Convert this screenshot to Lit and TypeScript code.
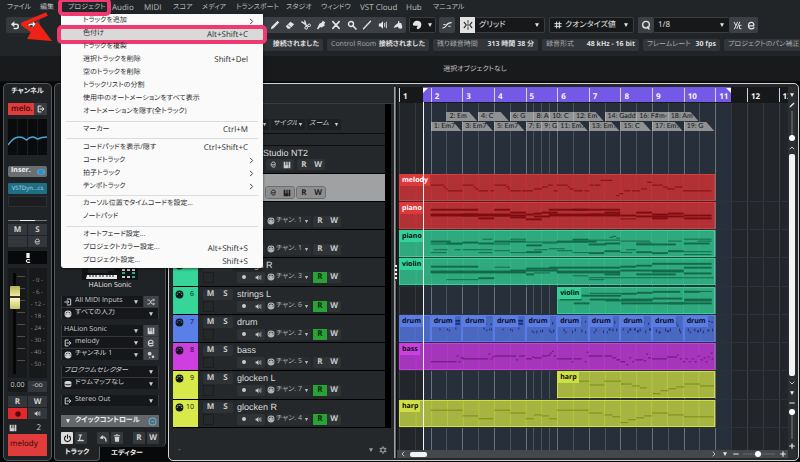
import { LitElement, html, svg, css, nothing } from "lit";
import { customElement } from "lit/decorators.js";
import { classMap } from "lit/directives/class-map.js";
import { styleMap } from "lit/directives/style-map.js";

/* ---------- icons, all on a 12 x 12 grid ---------- */
const line = (d: string, w = 1.4) =>
  svg`<path d=${d} fill="none" stroke="currentColor" stroke-width=${w} stroke-linecap="round" stroke-linejoin="round"/>`;
const fill = (d: string) => svg`<path d=${d} fill="currentColor"/>`;

const ICONS: Record<string, unknown> = {
  undo: svg`${line("M4.5 5.2h3a2.4 2.4 0 0 1 0 4.9H5", 1.8)}${fill("M1 5.2 5.2 1.6v7.2z")}`,
  redo: svg`${line("M7.5 5.2h-3a2.4 2.4 0 0 0 0 4.9H7", 1.8)}${fill("M11 5.2 6.8 1.6v7.2z")}`,
  pencil: fill("M1 11l.8-2.8L9 1l2 2-7.2 7.2z"),
  eraser: svg`${fill("M1 7.5 6.5 2 11 5.2 5.8 10.5H3.2z")}<path d="M3.2 5.6 7.4 9" stroke="#333" stroke-width=".8"/>`,
  scissors: svg`${line("M1 2.2 8 7M4.5 1.2 6.5 7.5", 1.6)}<circle cx="6.2" cy="9.4" r="1.6" fill="none" stroke="currentColor" stroke-width="1.2"/><circle cx="9.8" cy="6.4" r="1.6" fill="none" stroke="currentColor" stroke-width="1.2"/>`,
  glue: fill("M1 10.8 4 4.5 7 3l1-2 3 1.6-1 2.2 .4 2.2L6.6 9l-1.6-.6L2.6 11z"),
  cross: line("M2.2 2l7.6 8M9.8 2 2.2 10", 1.9),
  zoom: svg`<circle cx="4.8" cy="4.8" r="3" fill="none" stroke="currentColor" stroke-width="1.7"/>${line("M7.2 7.2l3.6 3.6", 2)}`,
  stroke: line("M1.8 10.5 10.2 1.5", 1.6),
  speaker: svg`${fill("M1 4.2h2L6 1.5v9L3 7.8H1z")}${line("M8 4v4M10 2.6v6.8", 1.1)}`,
  paint: svg`${fill("M.8 9.5 2 7l4-3.4V1.5h1.6V3.6h2.2L11.2 8l-1 2.6-3-.4-1.4-2.2z")}`,
  palette: fill("M6 1c3.2 0 5.2 2 5.2 4.6S9.4 10.8 6.6 11L5.6 9.2 7 7H3.4L1 6.4C1 3 3.2 1 6 1z"),
  curve: svg`${line("M1 9.6c4.5 0 3.4-6.4 10-6.4", 1.4)}${line("M2 5.5h2M8 7.5h2", 1.2)}`,
  snap: svg`${line("M6 .8v2M6 4.6v2.6M6 9.2v2", 1.2)}${line("M1.4 2.8 4 6 1.4 9.2M10.6 2.8 8 6l2.6 3.2", 1.4)}`,
  hash: line("M4 1.5v9M8 1.5v9M1.2 4h9.6M1.2 8h9.6", 1.5),
  q: svg`<circle cx="6" cy="5.6" r="4" fill="none" stroke="currentColor" stroke-width="1.7"/>${line("M7.6 8.2l2 2.6", 1.6)}`,
  iq: svg`${line("M1.6 1.8 3.6 5.4M6 1.5 2 10.5M9 1.5 5.2 10M10.8 5.8H8.6v4.4h2.2", 1.3)}`,
  e: line("M3.6 6.6h5.2c1-3-.8-4.8-2.8-4.8S2 3.6 2 6.2c0 2.7 1.8 4.2 4 4.2 1.4 0 2.4-.5 3.2-1.4", 1.7),
  exit: svg`${line("M6 1.6H1.8v8.8H6", 1.5)}${line("M4.5 6h5.5M8 3.8 10.4 6 8 8.2", 1.5)}`,
  enter: svg`${line("M5 1.6h5v8.8H5", 1.5)}${line("M1.2 6h5.5M4.8 3.8 7 6 4.8 8.2", 1.5)}`,
  midi: svg`<circle cx="6" cy="6" r="5.2" fill="currentColor"/><g fill="var(--dot,#222)"><circle cx="2.9" cy="6" r=".8"/><circle cx="3.9" cy="3.8" r=".8"/><circle cx="6" cy="3" r=".8"/><circle cx="8.1" cy="3.8" r=".8"/><circle cx="9.1" cy="6" r=".8"/></g>`,
  shuffle: line("M1 3h2.5l4 6H11M1 9h2.5l4-6H11M9.6 1.6 11 3 9.6 4.4M9.6 7.6 11 9 9.6 10.4", 1.3),
  keys: svg`${fill("M1 1h2.6v5.5h.9V11H1zM5 1h2v5.5h.5V11h-3V6.5H5zM8.4 1H11v10H8V6.5h.4z")}`,
  dots: svg`<circle cx="4" cy="4" r="2.8" fill="currentColor"/><circle cx="9" cy="8.8" r="2" fill="currentColor"/><circle cx="4" cy="10" r="1" fill="currentColor"/>`,
  drum: svg`<path d="M1 3.5C1 1 11 1 11 3.5V8.5C11 11 1 11 1 8.5z" fill="currentColor"/><path d="M2 5.5c2 1.2 6 1.2 8 0v1.5c-2 1-6 1-8 0z" fill="#222"/>`,
  power: svg`${line("M3.6 3A4 4 0 1 0 8.4 3M6 1v4.5", 1.5)}`,
  ell: line("M5.5 1.5 3.5 9.5H9M3 1.5h4M1.5 10h8", 1.8),
  arc: svg`${line("M10.5 10.5C10.5 6 8 3.6 4.5 4.6", 2)}${fill("M.8 6.5 5.5 1.5 6.5 8z")}`,
  trash: svg`${fill("M2.5 4h7l-.6 7.5H3.1z")}${line("M1.8 2.5h8.4M4.8 1.2h2.4", 1.3)}`,
  dot: svg`<circle cx="6" cy="6" r="4" fill="currentColor"/>`,
  down: fill("M2 2.5h8L6 10z"),
  right: line("M4 2l4 4-4 4", 1.5),
  left: line("M8 2 4 6l4 4", 1.6),
  up: line("M2 8l4-4 4 4", 1.6),
  chev: line("M2 4l4 4 4-4", 1.6),
  plus: line("M6 1.5v9M1.5 6h9", 2.4),
  minus: line("M1.5 6h9", 2.4),
  gear: svg`<circle cx="6" cy="6" r="3.2" fill="none" stroke="currentColor" stroke-width="1.6"/>${line("M6 .8v1.4M6 9.8v1.4M1.5 3.4l1.2.7M9.3 7.9l1.2.7M1.5 8.6l1.2-.7M9.3 4.1l1.2-.7", 1.6)}`,
  bypass: svg`<rect x="0" y="2" width="12" height="8" rx="4" fill="#3fa3dc"/><path d="M4.5 3v6M7.5 3v6" stroke="#27698f" stroke-width="1.2"/>`,
  ring: svg`<circle cx="6" cy="6" r="4.6" fill="none" stroke="#58b1e6" stroke-width="1.4"/><path d="M4.5 6h3.5" stroke="#58b1e6" stroke-width="1.4"/>`,
  mixer: svg`${fill("M4 0h4v6H4z")}${line("M8 8.2c-3-1-4 0-4 1.4s2 2 4 1.4", 1.3)}`,
};
const icon = (name: string, size = 9) =>
  html`<svg class="icon" viewBox="0 0 12 12" width=${size} height=${size} aria-hidden="true">${ICONS[name]}</svg>`;

const base = css`
  * { box-sizing: border-box; }
  button, select, input { font: inherit; color: inherit; margin: 0; padding: 0; border: 0; background: none; border-radius: 0; text-rendering: inherit; font-feature-settings: inherit; }
  button { display: inline-flex; align-items: center; justify-content: center; white-space: nowrap; }
  select { appearance: none; flex: 1; min-width: 0; width: 100%; height: 100%; outline: none; text-overflow: clip; }
  .icon { display: block; flex: none; overflow: visible; }
  .pick { display: flex; align-items: center; gap: 3px; min-width: 0; }
`;

const pick = (label: string, value: string, lead?: string, caret = 6, cls = "") => html`
  <label class="pick ${cls}">${lead ? icon(lead, 8) : nothing}<select aria-label=${label}><option>${value}</option></select>${icon("down", caret)}</label>`;

/* ---------- project menu ---------- */
type Entry = { text: string; keys?: string; sub?: boolean; on?: boolean } | null;
const ENTRIES: Entry[] = [
  { text: "トラックを追加", sub: true },
  { text: "色付け", keys: "Alt+Shift+C", on: true },
  { text: "トラックを複製" },
  { text: "選択トラックを削除", keys: "Shift+Del" },
  { text: "空のトラックを削除" },
  { text: "トラックリストの分割" },
  { text: "使用中のオートメーションをすべて表示" },
  { text: "オートメーションを隠す(全トラック)" },
  null,
  { text: "マーカー", keys: "Ctrl+M" },
  null,
  { text: "コードパッドを表示/隠す", keys: "Ctrl+Shift+C" },
  { text: "コードトラック", sub: true },
  { text: "拍子トラック", sub: true },
  { text: "テンポトラック", sub: true },
  null,
  { text: "カーソル位置でタイムコードを設定..." },
  { text: "ノートパッド" },
  null,
  { text: "オートフェード設定..." },
  { text: "プロジェクトカラー設定...", keys: "Alt+Shift+S" },
  { text: "プロジェクト設定...", keys: "Shift+S" },
];

@customElement("project-menu")
export class ProjectMenu extends LitElement {
  static styles = [base, css`
    :host { display: flex; flex-direction: column; box-sizing: border-box; width: 202px; height: 254px; padding-top: 1px; background: #fafafa; color: #2c2c2c; border-radius: 0 0 3px 3px; box-shadow: 0 1px 3px #0008; font-size: 7px; }
    .entry { flex: 1 1 13px; min-height: 0; width: 100%; justify-content: space-between; padding: 0 15px 0 22px; position: relative; }
    .entry.sub { padding-right: 8px; }
    .entry.on { background: #d9d9da; }
    .entry.on::after { content: ""; position: absolute; inset: -3px -4px; border: 4px solid #ee3a70; border-radius: 5px; }
    .keys { font-size: 8px; }
    hr { flex: none; width: 192px; height: 1px; margin: 2px 5px; border: 0; background: #dcdcdc; }
  `];
  render() {
    return ENTRIES.map((e) => e
      ? html`<button role="menuitem" class=${classMap({ entry: true, on: !!e.on, sub: !!e.sub })}>
          <span>${e.text}</span>${e.keys ? html`<span class="keys">${e.keys}</span>` : nothing}${e.sub ? icon("right", 7) : nothing}
        </button>`
      : html`<hr>`);
  }
}

/* ---------- top bars ---------- */
const MENUS = ["ファイル", "編集", "プロジェクト", "Audio", "MIDI", "スコア", "メディア", "トランスポート", "スタジオ", "ウィンドウ", "VST Cloud", "Hub", "マニュアル"];
const TOOLS: [string, string][] = [["pencil", "鉛筆"], ["eraser", "消しゴム"], ["scissors", "はさみ"], ["glue", "のり"], ["cross", "ミュート"], ["zoom", "ズーム"], ["stroke", "ライン"], ["speaker", "再生"], ["paint", "カラー"]];

@customElement("top-bars")
export class TopBars extends LitElement {
  static styles = [base, css`
    :host { display: block; background: #222528; color: #b9bbbd; font-size: 7px; position: relative; }
    nav { display: grid; grid-template-columns: 33px 28px 44px 32px 29px 29px 34px 50px 35px 39px 46px 27px auto; height: 16px; padding-left: 7px; justify-items: start; }
    nav button { position: relative; height: 16px; }
    .latin { font-size: 8px; }
    .open::after { content: ""; position: absolute; inset: -2px -5px 0 -10px; border: 4px solid #ee3a70; border-radius: 5px; }
    .tools { display: flex; align-items: center; height: 19px; padding: 1px 0 2px 6px; color: #e4e4e4; }
    .tools > * { height: 16px; flex: none; }
    .history { display: flex; width: 34px; background: #36393c; border-radius: 2px; margin-right: 222px; }
    .history button { flex: 1; }
    .strip { display: grid; grid-template-columns: repeat(9, 1fr); width: 144px; padding-left: 5px; background: #3c3f43; border-radius: 2px; margin-right: 3px; }
    .dark { background: #17181a; border: 1px solid #3a3d40; border-radius: 2px; padding: 0 4px; gap: 5px; }
    .color { width: 27px; margin-right: 3px; }
    .curve { width: 16px; background: #3c3f43; border-radius: 2px; margin-right: 5px; }
    .snap { width: 15px; background: #e2e2e2; color: #222; }
    .grid { width: 70px; margin-right: 4px; border-left: 0; font-size: 8px; }
    .quant { width: 85px; margin-right: 4px; font-size: 8px; gap: 3px; }
    .q { width: 15px; background: #3c3f43; }
    .eighth { width: 77px; font-size: 8px; }
    .iq { width: 28px; background: #3c3f43; display: flex; border-radius: 0 2px 2px 0; }
    .iq button { flex: 1; }
    .status { display: flex; gap: 4px; height: 21px; padding: 4px 0 5px 230px; overflow: hidden; color: #a9abad; }
    .cell { display: flex; flex: none; align-items: center; justify-content: space-between; height: 12px; padding: 0 4px; background: #323539; border-radius: 2px; white-space: nowrap; }
    .cell b { color: #dedede; font-weight: 700; }
    .c1 { width: 93px; } .c2 { width: 102px; } .c3 { width: 105px; } .c4 { width: 97px; } .c5 { width: 77px; } .c6 { width: 110px; }
    .info { display: flex; align-items: center; justify-content: center; height: 26px; padding: 3px 0 0 150px; background: #191a1c; color: #c4c4c4; border-bottom: 1px solid #0d0d0e; }
    project-menu { position: absolute; left: 61px; top: 14px; z-index: 5; }
    .arrow { position: absolute; left: 0; top: 0; z-index: 7; pointer-events: none; }
    .front { z-index: 6; }
  `];
  render() {
    return html`
      <nav aria-label="メニュー">${MENUS.map((m) => html`<button class=${classMap({ open: m === "プロジェクト", front: m === "プロジェクト", latin: /^[A-Z]/.test(m) })}>${m}</button>`)}</nav>
      <div class="tools">
        <div class="history"><button aria-label="元に戻す">${icon("undo", 10)}</button><button aria-label="やり直し">${icon("redo", 10)}</button></div>
        <div class="strip">${TOOLS.map(([i, l]) => html`<button aria-label=${l}>${icon(i, 10)}</button>`)}</div>
        <button class="dark color" aria-label="カラー">${icon("palette", 10)}${icon("down", 6)}</button>
        <button class="curve" aria-label="ゼロクロス">${icon("curve", 10)}</button>
        <button class="snap" aria-label="スナップ">${icon("snap", 10)}</button>
        ${pick("スナップタイプ", "グリッド", undefined, 6, "dark grid")}
        ${pick("グリッドの間隔", "クオンタイズ値", "hash", 6, "dark quant")}
        <button class="q" aria-label="クオンタイズ">${icon("q", 10)}</button>
        ${pick("クオンタイズプリセット", "1/8", undefined, 6, "dark eighth")}
        <div class="iq"><button aria-label="iQ">${icon("iq", 9)}</button><button aria-label="編集">${icon("e", 9)}</button></div>
      </div>
      <div class="status">
        <div class="cell c1"><span></span><b>接続されました</b></div>
        <div class="cell c2"><span>Control Room</span><b>接続されました</b></div>
        <div class="cell c3"><span>残り録音時間</span><b>313 時間 38 分</b></div>
        <div class="cell c4"><span>録音形式</span><b>48 kHz - 16 bit</b></div>
        <div class="cell c5"><span>フレームレート</span><b>30 fps</b></div>
        <div class="cell c6"><span>プロジェクトのパン補正</span><b>均等</b></div>
      </div>
      <div class="info">選択オブジェクトなし</div>
      <project-menu role="menu"></project-menu>
      <svg class="arrow" width="60" height="46" viewBox="0 0 60 46" aria-hidden="true">
        <path d="M47 14 23 24 33 31" fill="none" stroke="#f02218" stroke-width="4" stroke-linejoin="round"/><path d="M37 21 52 41 27 39z" fill="#f02218"/>
      </svg>`;
  }
}

/* ---------- channel strip ---------- */
@customElement("channel-strip")
export class ChannelStrip extends LitElement {
  static styles = [base, css`
    :host { display: flex; flex-direction: column; width: 49px; padding: 0 4px 4px; border: 1px solid #55585b; border-radius: 5px; background: #202326; color: #d0d0d0; font-size: 7px; }
    h2 { margin: 0; font-size: 7px; line-height: 15px; text-align: center; color: #eee; }
    .name { display: flex; height: 12px; margin-top: 4px; }
    .name span { width: 26px; padding-left: 3px; background: #e23b3b; color: #3a0808; font-size: 8px; font-weight: 600; line-height: 11px; }
    .name button { flex: 1; background: #3a3d40; color: #eee; }
    .eq { height: 36px; margin-top: 4px; background: #090b0d; display: block; width: 100%; }
    .insert { display: flex; align-items: center; justify-content: space-between; height: 11px; margin-top: 11px; padding: 0 2px 0 3px; background: #6c6f72; border-radius: 2px; font-weight: 700; color: #f2f2f2; }
    .slot { height: 11px; margin-top: 6px; background: #1e6f83; color: #b7dbe4; border-radius: 1px; font-size: 6px; }
    .empty { height: 11px; margin-top: 2px; border: 1px solid #2c2f32; background: #1b1d20; }
    .rule { height: 1px; margin: 13px 0 3px; background: linear-gradient(90deg, #777 30%, #eee 30% 70%, #777 70%); }
    .pair { display: grid; grid-template-columns: 1fr 1fr; gap: 1px; }
    .pair > * { height: 11px; background: #33363a; font-weight: 700; font-size: 8px; }
    .pan { display: flex; align-items: center; justify-content: center; height: 13px; margin-top: 4px; background: #08090a; color: #f2f2f2; }
    .fader { display: grid; grid-template-columns: 1fr 1fr; gap: 2px; flex: 1; min-height: 90px; margin: 4px 0 3px; }
    .well { background: #17191b; position: relative; padding: 8px 2px 0 9px; }
    .well::before { content: ""; position: absolute; left: 5px; top: 5px; bottom: 4px; width: 3px; background: #050505; }
    .ticks { height: 86px; background: repeating-linear-gradient(#4a4d50 0 1px, transparent 1px 12px); }
    .cap { position: absolute; left: 2px; top: 18px; width: 10px; height: 23px; background: linear-gradient(#b5b053, #f0ec9a 42%, #333 43% 50%, #fbf8c0 52%, #c8c468); border-radius: 1px; }
    .scale { background: #17191b; padding-top: 6px; line-height: 12px; text-align: center; color: #8e9092; font-size: 6px; display: flex; flex-direction: column; }
    .val > * { font-weight: 400; font-size: 7px; display: flex; align-items: center; justify-content: center; background: #17191b; }
    .val > :last-child { background: #33363a; }
    .rw { margin-top: 4px; }
    .rw .rec { background: #e0292c; color: #5a0505; }
    .out { display: flex; align-items: center; justify-content: space-between; height: 13px; margin-top: 2px; padding: 0 6px 0 1px; font-size: 8px; }
    .tag { height: 22px; background: #e23b3b; color: #2a0808; font-size: 8px; line-height: 19px; padding-left: 2px; }
  `];
  render() {
    return html`
      <h2>チャンネル</h2>
      <div class="name"><span>melo.</span><button aria-label="出力">${icon("exit", 8)}</button></div>
      <svg class="eq" viewBox="0 0 38 36" preserveAspectRatio="none" aria-hidden="true">
        <path d="M9 0v36M19 0v36M29 0v36" stroke="#1c2226"/>
        <path d="M0 26C4 20 7 18 11 18c5 0 5 2 7 3 2-2 3-3 6-3 3 0 3 2 5 2 2-1 5-2 9-2" fill="none" stroke="#4aa7dc" stroke-width="1.4"/>
      </svg>
      <div class="insert"><span>Inser.</span>${icon("bypass", 8)}</div>
      <button class="slot">VSTDyn...cs</button>
      <div class="empty"></div>
      <div class="rule"></div>
      <div class="pair"><button>M</button><button>S</button><span></span><button aria-label="編集">${icon("e", 7)}</button></div>
      <div class="pan">${icon("mixer", 10)}</div>
      <div class="fader">
        <div class="well"><div class="ticks"></div><div class="cap"></div></div>
        <div class="scale">${[0, 6, 12, 18, 24, 30, 40, 50].map((n) => html`<span>- ${n} -</span>`)}</div>
      </div>
      <div class="pair val"><span>0.00</span><span>-oo</span></div>
      <div class="pair rw"><button>R</button><button>W</button><button class="rec" aria-label="録音">${icon("dot", 8)}</button><button aria-label="モニター">${icon("speaker", 7)}</button></div>
      <div class="out">${icon("keys", 8)}<span>2</span></div>
      <div class="tag">melody</div>`;
  }
}

/* ---------- inspector ---------- */
@customElement("track-inspector")
export class TrackInspector extends LitElement {
  static styles = [base, css`
    :host { display: flex; flex-direction: column; width: 112px; color: #d0d2d3; font-size: 7px; }
    .body { flex: 1; display: flex; flex-direction: column; padding: 183px 6px 3px; border: 1px solid #55585b; border-bottom: 0; border-radius: 5px 5px 5px 0; background: #202326; }
    .art { align-self: center; display: block; }
    .title { font-size: 7px; line-height: 11px; text-align: center; color: #e6e6e6; font-weight: 500; }
    .box { display: grid; grid-template-columns: 1fr 14px; gap: 1px; background: #34373a; border: solid #34373a; border-width: 0 1px; margin-top: 5px; }
    .box + .box { margin-top: 6px; }
    .box .pick { height: 11px; background: #15171a; padding: 0 4px 0 2px; }
    .box .wide { grid-column: span 2; }
    .box button { background: #404347; }
    .italic { font-style: italic; }
    .quick { display: flex; align-items: center; gap: 4px; height: 12px; margin-top: 9px; padding: 0 2px 0 4px; background: #64686b; color: #f0f0f0; font-weight: 700; }
    .quick span { flex: 1; }
    .acts { display: flex; gap: 2px; margin-top: 5px; font-size: 8px; font-weight: 700; }
    .acts button { width: 12px; height: 12px; background: #36393c; border-radius: 1px; }
    .acts .on { background: #dcdcdc; color: #222; }
    .gap { flex: 1; }
    .tabs { display: flex; height: 14px; font-weight: 700; color: #f0f0f0; }
    .tabs button { flex: 0 0 54px; }
    .tabs .cur { flex: 0 0 46px; background: #202326; border: 1px solid #55585b; border-top: 0; border-radius: 0 0 4px 4px; }
  `];
  render() {
    return html`
      <div class="body">
        <svg class="art" width="56" height="13" viewBox="0 0 56 13" aria-hidden="true">
          <rect width="56" height="13" fill="#101214"/><path d="M5 8h30v4H4z" fill="#e8e8e8"/>
          <path d="M8 8v2M11 8v2M14 8v2M18 8v2M21 8v2M25 8v2M28 8v2M31 8v2" stroke="#222"/>
          <path d="M40 3h3M45 3h3M50 3h3M40 10h3M45 10h3" stroke="#c9c9c9" stroke-width="2"/><path d="M40 6h3M50 6h3M50 10h3" stroke="#2fae7b" stroke-width="2"/>
          <path d="M6 3h26M6 5h20" stroke="#33373a"/>
        </svg>
        <div class="title">HALion Sonic</div>
        <div class="box">
          ${pick("MIDI入力", "All MIDI Inputs", "enter")}<button aria-label="変換">${icon("shuffle", 8)}</button>
          ${pick("入力", "すべての入力", "midi", 6, "wide")}
        </div>
        <div class="box">
          ${pick("音源", "HALion Sonic")}<button aria-label="鍵盤">${icon("keys", 8)}</button>
          ${pick("出力", "melody", "exit")}<button aria-label="編集">${icon("e", 8)}</button>
          ${pick("チャンネル", "チャンネル 1", "midi")}<button aria-label="設定">${icon("dots", 8)}</button>
        </div>
        <div class="box">
          ${pick("プログラム", "プログラムセレクター", undefined, 6, "wide italic")}
          ${pick("ドラムマップ", "ドラムマップなし", "drum", 6, "wide")}
        </div>
        <div class="box">${pick("オーディオ出力", "Stereo Out", "exit", 6, "wide")}</div>
        <div class="quick">${icon("down", 6)}<span>クイックコントロール</span>${icon("ring", 9)}</div>
        <div class="acts">
          <button class="on" aria-label="オン">${icon("power", 9)}</button><button aria-label="ラーン">${icon("ell", 8)}</button><span class="gap"></span>
          <button aria-label="戻す">${icon("arc", 8)}</button><button aria-label="削除">${icon("trash", 8)}</button><span class="gap"></span>
          <button>R</button><button>W</button>
        </div>
      </div>
      <div class="tabs"><button class="cur">トラック</button><button>エディター</button></div>`;
  }
}

/* ---------- track list ---------- */
type Track = { no?: number; name?: string; color: string; ch?: number; read?: boolean; sel?: boolean };
const TRACKS: Track[] = [
  { color: "#dd3a3c", sel: true },
  { color: "#dd3a3c", ch: 1 },
  { color: "#36d69a", ch: 1 },
  { name: "strings R", color: "#36d69a", ch: 3, read: true },
  { no: 6, name: "strings L", color: "#36d69a", ch: 6, read: true },
  { no: 7, name: "drum", color: "#5b7fe8", ch: 2, read: true },
  { no: 8, name: "bass", color: "#ce3fe0", ch: 5 },
  { no: 9, name: "glocken L", color: "#d8e94b", ch: 7, read: true },
  { no: 10, name: "glocken R", color: "#d8e94b", ch: 4, read: true },
];

@customElement("track-list")
export class TrackList extends LitElement {
  static styles = [base, css`
    :host { display: flex; flex-direction: column; width: 225px; color: #c9cbcc; font-size: 8px; }
    .head { height: 17px; border-bottom: 1px solid #3b3e41; }
    .list { padding-left: 4px; margin-right: 3px; border-right: 6px solid #000; }
    .filters { display: flex; gap: 2px; height: 30px; padding: 15px 0 3px 88px; border-bottom: 1px solid #0c0d0e; font-size: 7px; font-style: italic; }
    .filters .pick { height: 11px; width: 34px; padding: 0 2px; gap: 1px; background: #1d2022; }
    .filters .tiny { width: 8px; padding: 0 1px; }
    .blank { height: 12px; border-bottom: 1px solid #0c0d0e; }
    .studio { height: 28px; border-bottom: 1px solid #000; padding: 1px 0 0 90px; }
    .studio .name { line-height: 12px; }
    .rows { display: grid; grid-template-rows: var(--rows); }
    .track { display: flex; border-bottom: 1px solid #000; }
    .track.sel { background: #a0a1a2; color: #222; }
    .stripe { display: flex; justify-content: space-between; width: 25px; padding: 3px 4px 0 2px; color: #10151a; font-size: 7px; line-height: 9px; }
    .cells { flex: 1; display: grid; grid-template-columns: 30px 1fr; grid-template-rows: 12px 12px; column-gap: 4px; padding: 1px 0 0 5px; align-items: center; }
    .name { font-family: "Liberation Sans", Arial, sans-serif; font-size: 9px; white-space: nowrap; color: #dcdcdc; }
    .ms { display: flex; height: 11px; background: #2f3235; border-radius: 2px; font-weight: 700; }
    .ms button { flex: 1; }
    .sq { width: 11px; height: 11px; border: 1px solid #1b1d1f; }
    .ctl { display: flex; align-items: center; gap: 2px; }
    .grp { display: flex; height: 11px; background: #303336; border-radius: 2px; font-weight: 700; }
    .grp button { width: 14px; height: 11px; }
    .grp .read { background: #2aa336; color: #0a2a0d; }
    .ctl .pick { width: 44px; height: 11px; background: #2a2d30; font-size: 7px; padding-right: 2px; color: #b0b2b4; gap: 1px; --dot: #222; }
    .inst { display: flex; gap: 3px; padding-left: 3px; }
    .sel .inst { padding: 13px 0 0 68px; }
    .sel .grp { background: #8d8e90; outline: 1px solid #6d6e70; }
    .foot { display: flex; align-items: center; gap: 5px; flex: 1; padding: 14px 7px 0 9px; color: #999; }
    .foot span { flex: 1; }
  `];
  private inst() {
    return html`<div class="inst"><div class="grp"><button aria-label="編集">${icon("e", 7)}</button><button aria-label="音源">${icon("keys", 8)}</button></div>
      <div class="grp"><button>R</button><button>W</button></div></div>`;
  }
  render() {
    return html`
      <div class="head"></div>
      <div class="list">
        <div class="filters">
          <span class="pick tiny">${icon("down", 5)}</span>
          ${pick("サイクル", "サイクル", undefined, 5)}${pick("ズーム", "ズーム", undefined, 5)}
        </div>
        <div class="blank"></div>
        <div class="studio"><div class="name">Studio NT2</div>${this.inst()}</div>
        <div class="rows">${TRACKS.map((t) => html`
          <div class=${classMap({ track: true, sel: !!t.sel })}>
            <div class="stripe" style=${styleMap({ background: t.color, "--dot": t.color })}>${icon("midi", 9)}<span>${t.no ?? ""}</span></div>
            ${t.sel ? this.inst() : html`
              <div class="cells">
                <div class="ms"><button>M</button><button>S</button></div><div class="name">${t.name ?? ""}</div>
                <div class="sq"></div>
                <div class="ctl">
                  <div class="grp"><button aria-label="録音">${icon("dot", 6)}</button><button aria-label="モニター">${icon("speaker", 7)}</button></div>
                  ${pick("チャンネル", `チャン. ${t.ch}`, "midi", 5)}
                  <div class="grp"><button class=${classMap({ read: !!t.read })}>R</button><button>W</button></div>
                </div>
              </div>`}
          </div>`)}</div>
      </div>
      <div class="foot"><span>-</span>${icon("down", 6)}${icon("gear", 8)}</div>`;
  }
}

/* ---------- timeline ---------- */
const SPAN = 12.3; // bars visible, counted from bar 1
const pct = (bars: number) => `${(bars / SPAN) * 100}%`;
const at = (bar: number) => pct(bar - 1);

/* A note is written "x width y height", the height being optional; x counts from the clip's start. */
type Clip = { row: number; from: number; to: number; name: string; ink: string; color: string; note: string; white?: boolean; notes: string };
const B = 31.67; // width of one bar in note units

const MELODY = "31 13 11;44 2 13;46 2 15;48 15 17;63 11 11;74 2 13;76 3 15;79 10 17;91 4 17;95 12 11;107 3 13;109 2 15;111 11 17;123 11 17;135 8 15;143 6 13;149 5 11;155 4 17;158 11 11;169 2 13;171 4 15;175 9 17;186 5 17;191 4 11;196 6 11;202 12 6;218 3 22;221 4 20;226 6 17;234 8 17;243 6 15;249 5 8;254 11 11;265 5 13;269 8 15;277 8 13;285 29 17";
const PIANO = "31 48 7 2;31 48 12 3;63 48 12 3;79 16 16 2;95 16 7 2;95 32 13 2;111 16 10 2;111 16 15 2;127 8 12 2;127 16 17 2;135 8 11 2;143 16 10 2;135 16 14 2;150 40 7 2;150 72 12 3;190 16 12 2;174 48 7 2;206 16 10 2;222 16 13 2;222 16 17 1;238 16 10 2;238 48 14 2;254 16 12 2;254 16 16 2;270 16 11 2;286 28 13 2;286 28 16 2";
const HANDS = "31 20 11 2;47 16 13 2;31 32 14;63 16 12 2;79 16 13 2;83 10 9;95 32 11 2;95 16 14;111 16 9;127 16 15 2;143 16 13;127 62 12;158 40 11 2;174 16 9 2;190 32 10;190 18 14 2;206 16 13 2;222 30 11;238 16 13;238 40 14 2;270 14 11;286 28 9;286 26 13 2;300 14 11;31 16 23;34 14 20;55 6 20;63 30 20;79 14 23;95 16 21;111 16 23;127 16 22 2;135 14 20;150 16 19;158 16 21;174 16 23;190 16 23 2;206 16 21 2;222 12 23;228 10 20;238 16 22 2;254 16 23 2;270 16 21 2;286 28 22;286 28 25;211 4 7;214 4 6;218 4 8";
const STRINGS = "31 48 8 2;31 96 13 3;47 32 22;79 16 20 2;95 16 9;111 48 12 2;127 8 16 2;135 16 15;127 32 10 2;150 72 9 2;158 64 13 3;174 16 18;190 16 22;206 16 16 2;222 16 8 2;222 32 12 2;238 16 7 2;238 40 16 2;254 60 5 2;254 32 12 3;286 28 15 2;286 28 9 2;190 126 20";
const VIOLIN = "2 22 12 2;16 16 16 2;24 40 8 2;32 30 12 2;32 32 6 1;48 16 13 2;64 16 6 2;64 32 12 3;80 16 5 2;64 64 16 2;96 28 4 2;96 30 11 2;112 44 16 2;128 16 4 2;128 28 12 3;128 28 4";
const BASS = "31 26 19;57 2 13;59 2 19;61 3 15;63 26 16;89 2 11;91 2 16;93 2 14;95 22 13;117 2 17;120 6 13;127 6 16;133 2 14;135 8 15;143 6 13;149 3 12;151 2 10;153 2 8;155 2 13;158 15 16;173 2 19;175 8 16;186 2 19;188 2 9;190 14 13;206 8 13;214 4 15;218 4 17;222 5 19;228 2 22;231 2 15;234 2 19;237 8 17;246 2 18;248 2 11;250 3 15;254 15 16;269 10 14;279 2 12;282 2 16;285 2 19;288 2 16;291 2 19;294 2 16;297 2 19;300 2 13;303 2 17;306 2 15;308 2 19;310 2 14;313 2 10;314 2 16";
const HARP_A = "20 12 10;32 15 14;47 17 10;64 11 13;75 8 15;83 7 17;64 2 13;96 8 23;104 8 20;112 8 18;120 8 16;128 16 13;144 15 15;159 31 18";
const HARP_B = "31 32 10;63 16 16;79 15 19;95 16 10;111 16 13;127 8 19;135 8 15;143 7 16;150 8 19;158 32 10;190 14 13;206 8 15;214 8 17;222 8 23;230 8 20;238 8 18;246 8 16;254 16 13;270 16 15;286 30 17";
const HITS = ["", "8 1 14 2;16 1 14 2;18 1 15 2;25 1 13 2;25 5 5 2;25 5 8 2", "22 1 13 2;24 1 8 2;25 1 15 2;28 1 14 2;30 1 14 2;29 2 9", "8 1 14 2;16 1 14 2;18 1 15 2;25 1 13 2;25 5 5 2;25 5 8 2", "5 1 16 2;7 1 17 2;10 1 16 3;14 1 16 2;16 1 15 3;24 1 15 3;26 1 17 2;28 1 15 3;23 1 8 2;27 1 7 3", "6 1 14 3;8 1 17 2;15 1 16 3;18 1 14 3;25 1 15 3;29 1 17 2;24 1 7 2;29 1 6 2", "4 1 17 2;6 1 14 3;14 1 16 3;18 1 17 2;20 2 14 2;24 1 14 3;23 1 9 2;26 1 6 3;28 1 14 3", "2 1 14 2;7 1 16 3;9 2 14 2;14 2 14 2;17 2 16 2;20 1 14 3;26 1 16 3;30 2 14 2;24 1 7 2;29 1 8 2", "3 1 15 3;6 2 17 2;13 1 14 3;15 2 16 2;18 1 14 3;24 1 7 3;26 1 10 2;28 1 14 3;29 1 17 2", "3 1 14 3;5 1 17 2;10 1 14 3;13 2 16 2;16 1 14 3;19 1 16 3;22 5 6;24 2 15 2;28 2 7;29 1 14 3"];

const RED = { color: "#dc393b", ink: "#b23134", note: "#7f0d10" };
const GREEN = { color: "#34d199", ink: "#2fa97d", note: "#136a4b" };
const BLUE = { color: "#5a7ce4", ink: "#4a68c0", note: "#132c80" };
const PURPLE = { color: "#cb3fe0", ink: "#a536bc", note: "#651373" };
const LIME = { color: "#cfe043", ink: "#a6b541", note: "#7a8a10" };

const CLIPS: Clip[] = [
  { row: 1, from: 1, to: 11, name: "melody", white: true, notes: MELODY, ...RED },
  { row: 2, from: 1, to: 11, name: "piano", white: true, notes: PIANO, ...RED },
  { row: 3, from: 1, to: 11, name: "piano", notes: HANDS, ...GREEN },
  { row: 4, from: 1, to: 11, name: "violin", notes: STRINGS, ...GREEN },
  { row: 5, from: 6, to: 11, name: "violin", notes: VIOLIN, ...GREEN },
  ...HITS.map((notes, i) => ({ row: 6, from: i + 1, to: i + 2, name: "drum", notes, ...BLUE })),
  { row: 7, from: 1, to: 11, name: "bass", notes: BASS, ...PURPLE },
  { row: 8, from: 6, to: 11, name: "harp", notes: HARP_A, ...LIME },
  { row: 9, from: 1, to: 11, name: "harp", notes: HARP_B, ...LIME },
];

const CHORDS: [number, string][] = [[2, "Em7"], [2.5, "Em"], [3, "Em7"], [3.5, "C"], [4, "Em7"], [4.5, "G"], [5, "Em7"], [5.25, "Am"], [5.5, "G"], [5.75, "C"], [6, "Em7"], [6.5, "Em"], [7, "Em7"], [7.5, "Gadd9"], [8, "C"], [8.5, "F#m-5"], [9, "Em7"], [9.5, "Am"], [10, "G"]];
const BARS = Array.from({ length: 13 }, (_, i) => i + 1);
const LOOP = [1.76, 11.5];

@customElement("time-line")
export class TimeLine extends LitElement {
  static styles = [base, css`
    :host { display: flex; flex-direction: column; flex: 1; min-width: 0; padding-left: 2px; overflow: hidden; font-size: 7px; position: relative; background: #1d2023; }
    .ruler { position: relative; height: 16px; background: #17181a; overflow: hidden; }
    .loop { position: absolute; top: 0; height: 15px; background: #7458e6; }
    .loop::before, .loop::after { content: ""; position: absolute; top: 1px; border-top: 5px solid #fff; }
    .loop::before { left: 0; border-right: 5px solid transparent; }
    .loop::after { right: 0; border-left: 5px solid transparent; }
    .bar { position: absolute; top: 1px; height: 14px; padding-left: 3px; border-left: 1px solid #d6d6da; color: #f4f4f4; font-size: 8px; font-weight: 700; line-height: 18px; }
    .field { position: relative; flex: 1; padding-top: 9px; background: #22262a; }
    .range { position: absolute; top: 0; bottom: 0; background: #27303a; }
    .tick { position: absolute; top: 0; bottom: 0; width: 1px; background: #33383c; }
    .tick.in { background: #4b545d; }
    .tick.major { background: #3e4347; }
    .tick.in.major { background: #69727a; }
    .cursor { position: absolute; top: 15px; bottom: 0; width: 1px; background: #f4f4f4; z-index: 3; }
    .chords { position: relative; height: 19px; margin-bottom: 43px; font-family: Lato, "Open Sans", sans-serif; }
    .chord { position: absolute; height: 9px; top: 0; padding-left: 2px; overflow: hidden; white-space: nowrap; background: #8f9192; color: #1b1d1f; font-weight: 500; line-height: 9px; border-left: 1px solid #aaacad; }
    .chord.low { top: 10px; }
    .chord.cut { clip-path: polygon(0 0, calc(100% - 8px) 0, 100% 100%, 0 100%); }
    .lanes { position: relative; display: grid; grid-template-rows: var(--rows); grid-template-columns: 100%; }
    .lane { border-bottom: 1px solid #2c3237; grid-column: 1; }
    .clip { grid-column: 1; position: relative; margin-bottom: 1px; height: 27px; border: 1px solid; overflow: hidden; }
    .clip svg { position: absolute; inset: 0; width: 100%; height: 100%; }
    .label { position: relative; display: inline-block; padding: 0 2px; line-height: 11px; height: 11px; font-size: 7px; font-weight: 700; color: #0b0d10; vertical-align: top; }
    .label.white { color: #fff; }
  `];
  render() {
    const steps = Array.from({ length: 25 }, (_, i) => 1 + i / 2).concat(5.25, 5.75);
    return html`
      <div class="ruler">
        <div class="loop" style=${styleMap({ left: at(LOOP[0]), width: pct(LOOP[1] - LOOP[0]) })}></div>
        ${BARS.map((b) => html`<span class="bar" style=${styleMap({ left: at(b) })}>${b}</span>`)}
      </div>
      <div class="field">
        <div class="range" style=${styleMap({ left: at(LOOP[0]), width: pct(LOOP[1] - LOOP[0]) })}></div>
        ${steps.map((s) => html`<i class=${classMap({ tick: true, major: s % 1 === 0, in: s > LOOP[0] && s < 11.2 })} style=${styleMap({ left: at(s) })}></i>`)}
        <div class="chords">${CHORDS.map(([b, n], i) => {
          const next = CHORDS[i + 2]?.[0] ?? 99;
          const full = n.length < 5 && next - b > 0.8;
          const width = full ? Math.min(next - b, 0.97) : Math.min(next - b, 1);
          return html`<span class=${classMap({ chord: true, low: i % 2 === 0, cut: full })} style=${styleMap({ left: at(b), width: pct(width) })}>${i + 1}: ${n}</span>`;
        })}</div>
        <div class="lanes">
          ${BARS.slice(0, 9).map((r) => html`<div class="lane" style=${styleMap({ gridRow: String(r) })}></div>`)}
          ${CLIPS.map((c) => this.clip(c))}
        </div>
      </div>
      <i class="cursor" style=${styleMap({ left: `calc(2px + ${(100 * (LOOP[0] - 1)) / SPAN}%)` })}></i>`;
  }
  private clip(c: Clip) {
    const w = (c.to - c.from) * B;
    const lines = Array.from({ length: Math.round((c.to - c.from) * 2) }, (_, i) => ((i + 1) * B) / 2);
    return html`<div class="clip" style=${styleMap({ gridRow: String(c.row), marginLeft: at(c.from), width: pct(c.to - c.from), background: c.ink, borderColor: c.color })}>
      <svg viewBox="0 0 ${w} 26" preserveAspectRatio="none" aria-hidden="true">
        ${lines.map((x) => svg`<rect x=${x} y="0" width=".7" height="26" fill=${c.color} opacity=".6"/>`)}
        ${c.notes.split(";").filter(Boolean).map((n) => {
          const [x, nw, y, h] = n.split(" ").map(Number);
          return svg`<rect x=${x} y=${y - 1} width=${nw} height=${h || 1} fill=${c.note}/>`;
        })}
      </svg>
      <span class=${classMap({ label: true, white: !!c.white })} style=${styleMap({ background: c.color })}>${c.name}</span>
    </div>`;
  }
}

/* ---------- project window and page ---------- */
@customElement("app-root")
export class AppRoot extends LitElement {
  static styles = [base, css`
    :host { display: flex; flex-direction: column; min-height: 100vh; background: #08090a; overflow: hidden; font-family: "Open Sans", "Noto Sans CJK JP", sans-serif; font-feature-settings: "palt"; text-rendering: geometricPrecision; line-height: 1.2; --rows: repeat(2, 28px 28px 28px 29px) 28px; }
    top-bars { flex: none; }
    main { flex: 1; display: flex; gap: 2px; padding: 1px 1px 1px 3px; }
    .project { flex: 1; min-width: 0; display: flex; padding: 3px 2px 2px 0; border: 1px solid #d4d4d4; border-radius: 5px; background: #24282b; }
    .split { width: 3px; background: #6c6f71; border-left: 1px solid #a0a2a3; border-right: 1px solid #0e0f10; display: flex; flex-direction: column; align-items: center; justify-content: center; }
    .grip { width: 2px; height: 16px; background: repeating-linear-gradient(#fff 0 2px, #333 2px 4px); }
    .right { flex: 1; min-width: 0; display: grid; grid-template-columns: 1fr 8px; grid-template-rows: 1fr 8px; }
    time-line { grid-column: 1; }
    .vert { grid-row: span 2; display: flex; flex-direction: column; align-items: center; gap: 3px; padding: 4px 0 9px; background: #2c2f32; color: #e8e8e8; }
    .bar { background: #f4f4f4; border-radius: 2px; }
    .vert .bar { width: 6px; flex: 1; }
    .rail { position: relative; background: #55585b; }
    .vert .rail { width: 2px; height: 30px; }
    .knob { position: absolute; width: 6px; height: 6px; border-radius: 50%; background: #fff; }
    .vert .knob { left: -2px; bottom: 0; }
    .vert .low .knob { top: 0; }
    .hor { display: flex; align-items: center; gap: 4px; padding: 0 2px; background: #45484b; color: #e8e8e8; }
    .hor .bar { width: 17px; height: 5px; }
    .hor .space { flex: 1; }
    .hor .rail { width: 32px; height: 2px; }
    .hor .knob { top: -2px; left: 12px; }
    .hor button, .vert button { flex: none; width: 7px; height: 7px; }
  `];
  render() {
    return html`
      <top-bars></top-bars>
      <main>
        <channel-strip></channel-strip>
        <track-inspector></track-inspector>
        <section class="project">
          <track-list></track-list>
          <div class="split"><div class="grip"></div></div>
          <div class="right">
            <time-line></time-line>
            <div class="vert">
              <button aria-label="ルーラー">${icon("down", 6)}</button><button aria-label="編集">${icon("pencil", 6)}</button>
              <div class="rail"><i class="knob"></i></div>
              <button aria-label="上へ">${icon("up", 6)}</button>
              <div class="bar"></div>
              <button aria-label="下へ">${icon("chev", 6)}</button><button aria-label="表示">${icon("down", 6)}</button><button aria-label="縮小">${icon("minus", 6)}</button>
              <div class="rail low"><i class="knob"></i></div>
              <button aria-label="拡大">${icon("plus", 6)}</button>
            </div>
            <div class="hor">
              <button aria-label="左へ">${icon("left", 6)}</button><div class="bar"></div><span class="space"></span>
              <button aria-label="右へ">${icon("right", 6)}</button><button aria-label="表示">${icon("down", 6)}</button><button aria-label="縮小">${icon("minus", 6)}</button>
              <div class="rail"><i class="knob"></i></div><button aria-label="拡大">${icon("plus", 6)}</button>
            </div>
          </div>
        </section>
      </main>`;
  }
}
